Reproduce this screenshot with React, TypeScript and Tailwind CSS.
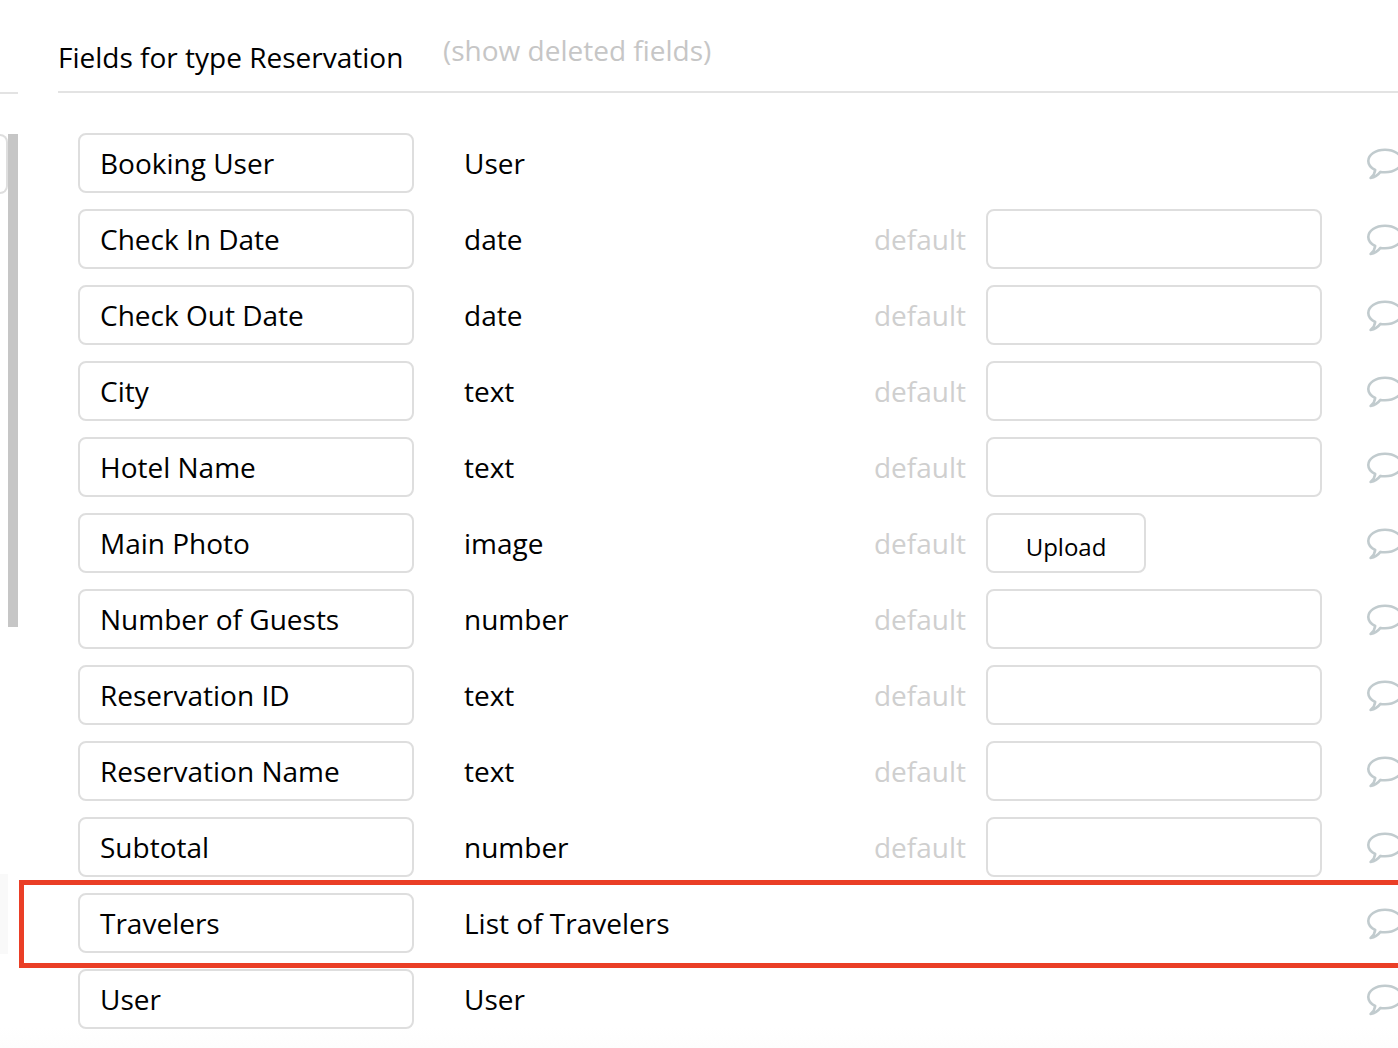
import React from 'react';

interface Field {
  name: string;
  type: string;
  control?: 'input' | 'upload';
}

const fields: Field[] = [
  { name: 'Booking User', type: 'User' },
  { name: 'Check In Date', type: 'date', control: 'input' },
  { name: 'Check Out Date', type: 'date', control: 'input' },
  { name: 'City', type: 'text', control: 'input' },
  { name: 'Hotel Name', type: 'text', control: 'input' },
  { name: 'Main Photo', type: 'image', control: 'upload' },
  { name: 'Number of Guests', type: 'number', control: 'input' },
  { name: 'Reservation ID', type: 'text', control: 'input' },
  { name: 'Reservation Name', type: 'text', control: 'input' },
  { name: 'Subtotal', type: 'number', control: 'input' },
  { name: 'Travelers', type: 'List of Travelers' },
  { name: 'User', type: 'User' },
];

const HIGHLIGHTED = 'Travelers';

const CommentIcon: React.FC = () => (
  <svg width="38" height="34" viewBox="0 0 38 34" fill="none" className="shrink-0">
    <path
      d="M9.2 23C4.9 20.9 2.3 17.6 2.3 14C2.3 7.7 9.6 2.8 19 2.8C28.4 2.8 35.7 7.7 35.7 14C35.7 20.3 28.4 25.3 19 25.3C17.3 25.3 15.9 25.2 14.4 24.9C12 28 8.4 30.2 4.6 31C7 28.9 8.9 26.4 9.2 23Z"
      stroke="#c1cbce"
      strokeWidth="2.6"
      strokeLinejoin="round"
    />
  </svg>
);

const FieldRow: React.FC<{ field: Field }> = ({ field }) => (
  <div className="relative flex h-[60px] items-center">
    {field.name === HIGHLIGHTED && (
      <div className="pointer-events-none absolute -top-[13px] -left-[59px] h-[88px] w-[1400px] border-5 border-[#ea3e26]" />
    )}
    <div className="flex h-[60px] w-[336px] shrink-0 items-center rounded-lg border-2 border-[#dedede] bg-white pl-5">
      {field.name}
    </div>
    <div className="ml-[50px] w-[380px] shrink-0">{field.type}</div>
    <div className="flex w-[478px] shrink-0 items-center">
      {field.control && (
        <>
          <span className="w-[142px] shrink-0 pr-5 text-right text-[#cfcfcf]">default</span>
          {field.control === 'upload' ? (
            <button className="h-[60px] w-40 rounded-lg border-2 border-[#dedede] bg-white pt-2 text-2xl">
              Upload
            </button>
          ) : (
            <div className="h-[60px] w-[336px] rounded-lg border-2 border-[#dedede] bg-white" />
          )}
        </>
      )}
    </div>
    <div className="ml-11 shrink-0 pt-0.5">
      <CommentIcon />
    </div>
  </div>
);

const App: React.FC = () => (
  <div className="flex h-[1048px] w-full overflow-hidden bg-linear-to-b from-white from-98% to-[#fdfdfd] font-['Open_Sans',sans-serif] text-[28px] leading-[38px] text-black">
    {/* Edge of the types list */}
    <div className="flex w-[18px] shrink-0 flex-col pt-[92px]">
      <div className="h-0.5 bg-[#e3e3e3]" />
      <div className="mt-10 flex">
        <div className="w-2">
          <div className="h-[60px] rounded-r-lg border-2 border-l-0 border-[#dedede]" />
          <div className="mt-[680px] h-20 bg-[#f9f9f9]" />
        </div>
        <div className="h-[493px] w-2.5 bg-[#c6c6c6]" />
      </div>
    </div>

    <main className="ml-10 min-w-0 flex-1">
      <header className="flex h-[93px] items-start border-b-2 border-[#e3e3e3]">
        <h1 className="mt-[38px] w-[385px] shrink-0 whitespace-nowrap">Fields for type Reservation</h1>
        <a className="mt-[31px] whitespace-nowrap text-[#c6c6c6]">(show deleted fields)</a>
      </header>
      <div className="flex flex-col gap-4 pt-10 pl-5">
        {fields.map((field) => (
          <FieldRow key={field.name} field={field} />
        ))}
      </div>
    </main>
  </div>
);

export default App;
